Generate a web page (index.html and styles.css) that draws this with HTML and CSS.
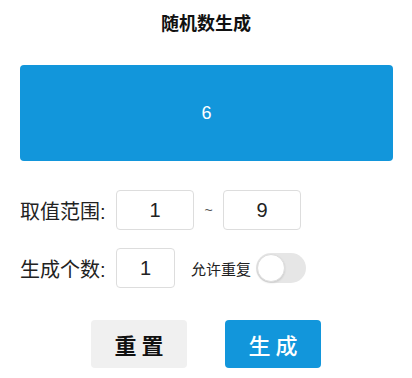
FILE: index.html
```html
<!DOCTYPE html>
<html lang="zh-CN">

<head>
    <meta charset="UTF-8">
    <meta name="viewport" content="width=device-width, initial-scale=1.0">
    <title>随机数生成</title>
    <link rel="stylesheet" href="styles.css">
</head>

<body>
    <div class="page">
        <h1 class="title">随机数生成</h1>

        <div class="result">6</div>

        <div class="form-row">
            <label class="row-label" for="min">取值范围:</label>
            <input class="num-input range-input" id="min" type="text" value="1">
            <span class="tilde">~</span>
            <input class="num-input range-input" id="max" type="text" value="9">
        </div>

        <div class="form-row">
            <label class="row-label" for="count">生成个数:</label>
            <input class="num-input count-input" id="count" type="text" value="1">
            <span class="repeat-label">允许重复</span>
            <div class="switch">
                <div class="switch-knob"></div>
            </div>
        </div>

        <div class="actions">
            <button class="btn btn-reset">重 置</button>
            <button class="btn btn-generate">生 成</button>
        </div>
    </div>
</body>

</html>
```

FILE: styles.css
```css
body {
    margin: 0;
    background-color: #fff;
    font-family: "Liberation Sans", "Noto Sans CJK SC", sans-serif;
    color: #222;
}

.page {
    width: 412px;
}

.title {
    margin: 0;
    height: 48px;
    line-height: 48px;
    text-align: center;
    font-size: 18px;
    font-weight: bold;
    color: #111;
}

.result {
    margin: 17px 19px 0 20px;
    height: 96px;
    border-radius: 4px;
    background-color: #1296db;
    color: #fff;
    font-size: 18px;
    display: flex;
    justify-content: center;
    align-items: center;
}

.form-row {
    display: flex;
    align-items: center;
    height: 40px;
    padding-left: 20px;
    margin-top: 29px;
}

.form-row + .form-row {
    margin-top: 18px;
}

.row-label {
    width: 96px;
    font-size: 20px;
    color: #222;
}

.num-input {
    box-sizing: border-box;
    height: 40px;
    border: 1px solid #ddd;
    border-radius: 4px;
    text-align: center;
    font-family: "Liberation Sans", "Noto Sans CJK SC", sans-serif;
    font-size: 20px;
    color: #222;
    padding: 0;
    outline: none;
}

.range-input {
    width: 78px;
}

.tilde {
    width: 29px;
    text-align: center;
    font-size: 14px;
    color: #555;
}

.count-input {
    width: 59px;
}

.repeat-label {
    margin-left: 16px;
    font-size: 15px;
    color: #222;
}

.switch {
    box-sizing: border-box;
    margin-left: 5px;
    width: 50px;
    height: 30px;
    border-radius: 15px;
    background-color: #e6e6e6;
    padding: 1px;
}

.switch-knob {
    box-sizing: border-box;
    width: 28px;
    height: 28px;
    border-radius: 50%;
    background-color: #fff;
    border: 1px solid #ddd;
    box-shadow: 0 1px 2px rgba(0, 0, 0, 0.12);
}

.actions {
    display: flex;
    justify-content: center;
    gap: 38px;
    margin-top: 32px;
}

.btn {
    width: 96px;
    height: 48px;
    border: none;
    border-radius: 4px;
    font-family: "Noto Sans CJK SC", sans-serif;
    font-size: 22px;
    cursor: pointer;
}

.btn-reset {
    background-color: #f0f0f0;
    color: #111;
    font-weight: bold;
}

.btn-generate {
    background-color: #1296db;
    color: #fff;
    font-weight: 500;
}
```
